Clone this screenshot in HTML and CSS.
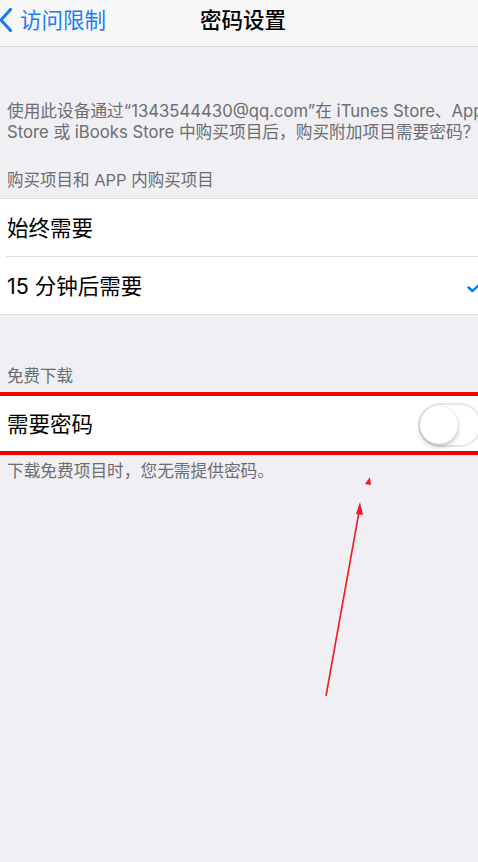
FILE: index.html
```html
<!DOCTYPE html>
<html>
<head>
<meta charset="utf-8">
<meta name="viewport" content="width=device-width, initial-scale=1">
<link rel="stylesheet" href="styles.css">
</head>
<body>
<header class="navbar">
  <a class="back" href="#">
    <svg class="chevron" width="14" height="24" viewBox="0 0 14 24"><path d="M11.5 1.5 L2 12 L11.5 22.5" fill="none" stroke="#1a7cf5" stroke-width="3.2" stroke-linecap="round" stroke-linejoin="round"/></svg>
    <span>访问限制</span>
  </a>
  <h1 class="title">密码设置</h1>
</header>

<div class="page">
  <p class="desc">使用此设备通过“1343544430@qq.com”在 iTunes Store、App<br>Store 或 iBooks Store 中购买项目后，购买附加项目需要密码？</p>

  <div class="section-title first">购买项目和 APP 内购买项目</div>
  <ul class="group">
    <li class="row"><span>始终需要</span></li>
    <li class="row"><span>15 分钟后需要</span>
      <svg class="check" width="16" height="12" viewBox="0 0 16 12"><path d="M1.5 6.5 L5.5 10 L14.5 1.5" fill="none" stroke="#007aff" stroke-width="2.4" stroke-linecap="round" stroke-linejoin="round"/></svg>
    </li>
  </ul>

  <div class="section-title second">免费下载</div>
  <div class="marked">
    <div class="row single"><span>需要密码</span>
      <div class="switch"><div class="knob"></div></div>
    </div>
  </div>
  <p class="footnote">下载免费项目时，您无需提供密码。</p>
</div>

<svg class="arrow" width="478" height="862" viewBox="0 0 478 862">
  <line x1="326" y1="696" x2="359" y2="512" stroke="#ee1c25" stroke-width="1.6"/>
  <polygon points="360,502 356,514 363,515" fill="#ee1c25"/>
  <polygon points="370,477 365,484 371,485" fill="#ee1c25"/>
</svg>
</body>
</html>
```

FILE: styles.css
```css
body {
  margin: 0;
  background: #efeff4;
  font-family: "Inter", "Noto Sans CJK SC", sans-serif;
  overflow: hidden;
  height: 862px;
}

.navbar {
  height: 46px;
  background: #f7f7f8;
  border-bottom: 1px solid #d9d9dc;
  display: flex;
  align-items: center;
  justify-content: center;
  position: relative;
}

.back {
  position: absolute;
  left: 0;
  top: 3px;
  display: flex;
  align-items: center;
  gap: 7px;
  color: #1a7cf5;
  text-decoration: none;
  font-size: 21.5px;
}

.chevron {
  margin-left: -1px;
  margin-top: 2px;
}

.title {
  margin: -10px 0 0 8px;
  font-size: 21.5px;
  font-weight: 500;
  color: #000;
}

.page {
  padding-top: 54px;
}

.desc {
  margin: 0;
  padding-left: 7px;
  font-size: 16.7px;
  line-height: 21px;
  color: #6d6d72;
  white-space: nowrap;
  overflow: hidden;
}

.section-title {
  padding-left: 7px;
  font-size: 16.5px;
  line-height: 21px;
  color: #6d6d72;
}

.section-title.first {
  margin-top: 27px;
  margin-bottom: 7px;
}

.section-title.second {
  margin-top: 51px;
  margin-bottom: 5px;
}

.group {
  list-style: none;
  margin: 0;
  padding: 0;
  background: #fff;
  border-top: 1px solid #e0e0e4;
  border-bottom: 1px solid #dcdce0;
}

.row {
  height: 57px;
  display: flex;
  align-items: center;
  justify-content: space-between;
  padding-left: 7px;
  font-size: 21.5px;
  color: #000;
  overflow: hidden;
}

.row span {
  margin-top: -3px;
}

.group .row + .row {
  border-top: 1px solid #dcdce0;
  margin-left: 6px;
  padding-left: 1px;
}

.check {
  margin-right: -5px;
  margin-top: 2px;
}

.marked {
  background: #fff;
  border-top: 4px solid #f50000;
  border-bottom: 4px solid #f50000;
}

.row.single {
  height: 55px;
}

.switch {
  width: 60px;
  height: 40px;
  border: 2px solid #e6e6ea;
  border-radius: 22px;
  margin-right: -4px;
  margin-top: 3px;
  position: relative;
  background: #fff;
}

.knob {
  position: absolute;
  left: 0;
  top: 1px;
  width: 38px;
  height: 38px;
  border-radius: 50%;
  background: #fff;
  box-shadow: 0 3px 5px rgba(0, 0, 0, 0.22), 0 0 1px rgba(0, 0, 0, 0.2);
}

.footnote {
  margin: 6px 0 0;
  padding-left: 7px;
  font-size: 16.7px;
  line-height: 21px;
  color: #6d6d72;
}

.arrow {
  position: absolute;
  left: 0;
  top: 0;
  pointer-events: none;
}
```
